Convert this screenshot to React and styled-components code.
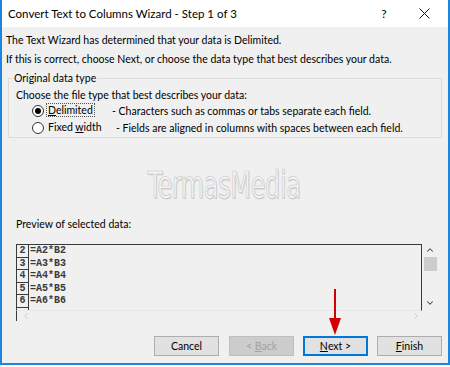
import React from 'react';
import styled, { createGlobalStyle } from 'styled-components';
import { ChevronUp, ChevronDown, ChevronLeft, ChevronRight } from 'lucide-react';

const GlobalStyle = createGlobalStyle`
    html, body {
        margin: 0;
        padding: 0;
        background: #ffffff;
    }
    body {
        font-family: 'Lato', 'Noto Sans', sans-serif;
        font-size: 10.5px;
        color: #000;
    }
`;

const Window = styled.div`
    position: relative;
    width: 450px;
    height: 365px;
    box-sizing: border-box;
    border: solid 2px #1c86dd;
    border-top: none;
    background-color: #f0f0f0;
    display: flex;
    flex-direction: column;
    overflow: hidden;
`;
const TitleBar = styled.div`
    height: 27px;
    background-color: #ffffff;
    display: flex;
    align-items: center;
    padding-left: 6px;
    font-size: 11.5px;
`;
const Title = styled.div`
    flex: 1;
`;
const Help = styled.div`
    width: 20px;
    text-align: center;
    font-size: 12px;
`;
const Close = styled.div`
    width: 40px;
    margin-left: 10px;
    margin-right: 4px;
    display: flex;
    justify-content: center;
    align-items: center;
`;
const Body = styled.div`
    flex: 1;
    display: flex;
    flex-direction: column;
    padding: 6px 6px 0 4px;
`;
const Line = styled.div`
    line-height: 14px;
    margin-bottom: ${props => props.gap || 0}px;
    margin-top: ${props => props.top || 0}px;
`;
const Group = styled.fieldset`
    margin: 5px 0 0 2px;
    padding: 0 0 1px 7px;
    border: solid 1px #dcdcdc;
    min-width: 0;
`;
const Legend = styled.legend`
    padding: 0 2px;
    margin-left: -4px;
    line-height: 14px;
`;
const RadioRow = styled.div`
    display: flex;
    align-items: center;
    height: 17px;
    padding-left: 16px;
`;
const RadioCircle = styled.span`
    width: 12px;
    height: 12px;
    box-sizing: border-box;
    border: solid 1px #333;
    border-radius: 50%;
    background-color: #fff;
    display: flex;
    align-items: center;
    justify-content: center;
    &::after {
        content: '';
        width: 6px;
        height: 6px;
        border-radius: 50%;
        background-color: ${props => (props.checked ? '#000' : 'transparent')};
    }
`;
const RadioLabel = styled.span`
    margin-left: 3px;
    width: ${props => props.width}px;
    line-height: 13px;
    box-sizing: border-box;
    span {
        outline: ${props => (props.focused ? 'dotted 1px #555' : 'none')};
        padding: 0 1px;
    }
`;
const Watermark = styled.div`
    align-self: center;
    margin-top: 28px;
    height: 40px;
    line-height: 40px;
    font-family: 'Liberation Sans Narrow', 'DejaVu Sans Condensed', sans-serif;
    font-size: 37px;
    transform: scaleX(0.72);
    color: #f3f3f3;
    -webkit-text-stroke: 0.7px #c6c6c6;
    text-shadow: 1px 1px 0 #d2d2d2;
    letter-spacing: -0.5px;
    user-select: none;
`;
const PreviewLabel = styled.div`
    margin-top: 11px;
    margin-left: 10px;
    line-height: 14px;
`;
const PreviewFrame = styled.div`
    margin-top: 13px;
    margin-left: 10px;
    width: 422px;
    height: 77px;
    display: grid;
    grid-template-columns: 1fr 16px;
    grid-template-rows: 1fr 10px;
`;
const DataArea = styled.div`
    border: solid 1px #3a3a3a;
    border-bottom: solid 1px #e6e6e6;
    overflow: hidden;
`;
const DataRow = styled.div`
    display: flex;
    height: 12.5px;
    font-family: 'Liberation Mono', monospace;
    font-size: 10px;
    font-weight: bold;
    color: #3a3a3a;
    line-height: 12px;
`;
const RowNum = styled.div`
    width: 12px;
    text-align: center;
    border-right: solid 1px #3a3a3a;
    border-bottom: solid 1px #3a3a3a;
    box-sizing: border-box;
`;
const RowText = styled.div`
    padding-left: 1px;
`;
const VScroll = styled.div`
    display: flex;
    flex-direction: column;
    align-items: center;
    padding: 1px 0 3px;
    color: #444;
`;
const Thumb = styled.div`
    width: 13px;
    height: 14px;
    margin-top: 2px;
    background-color: #cdcdcd;
    flex: none;
`;
const Spacer = styled.div`
    flex: 1;
`;
const HScroll = styled.div`
    display: flex;
    align-items: center;
    justify-content: space-between;
    padding: 0 1px 0 4px;
    color: #c4c4c4;
    border-left: solid 1px #3a3a3a;
`;
const Buttons = styled.div`
    display: flex;
    justify-content: flex-end;
    gap: 9px;
    margin-top: 15px;
`;
const Button = styled.div`
    width: 65px;
    height: 20px;
    box-sizing: border-box;
    display: flex;
    align-items: center;
    justify-content: center;
    white-space: pre;
    border-style: solid;
    border-width: ${props => (props.primary ? '2px' : '1px')};
    background-color: ${props => (props.disabled ? '#cccccc' : '#e1e1e1')};
    color: ${props => (props.disabled ? '#a3a3a3' : '#000')};
    border-color: ${props => (props.disabled ? '#bfbfbf' : props.primary ? '#0078d7' : '#adadad')};
    margin-left: ${props => props.extra || 0}px;
`;
const Arrow = styled.svg`
    position: absolute;
    left: 325px;
    top: 289px;
`;

const rows = [2, 3, 4, 5, 6];

function App() {
    return (
        <>
            <GlobalStyle />
            <Window>
                <TitleBar>
                    <Title>Convert Text to Columns Wizard - Step 1 of 3</Title>
                    <Help>?</Help>
                    <Close>
                        <svg width="11" height="11" viewBox="0 0 11 11">
                            <path d="M0.5 0.5 L10.5 10.5 M10.5 0.5 L0.5 10.5" stroke="#111" strokeWidth="1" />
                        </svg>
                    </Close>
                </TitleBar>
                <Body>
                    <Line gap={5}>The Text Wizard has determined that your data is Delimited.</Line>
                    <Line>If this is correct, choose Next, or choose the data type that best describes your data.</Line>
                    <Group>
                        <Legend>Original data type</Legend>
                        <Line top={3}>Choose the file type that best describes your data:</Line>
                        <RadioRow>
                            <RadioCircle checked />
                            <RadioLabel width={65} focused>
                                <span><u>D</u>elimited</span>
                            </RadioLabel>
                            <span>- Characters such as commas or tabs separate each field.</span>
                        </RadioRow>
                        <RadioRow>
                            <RadioCircle />
                            <RadioLabel width={69}>
                                <span>Fixed <u>w</u>idth</span>
                            </RadioLabel>
                            <span>- Fields are aligned in columns with spaces between each field.</span>
                        </RadioRow>
                    </Group>
                    <Watermark>TermasMedia</Watermark>
                    <PreviewLabel>Preview of selected data:</PreviewLabel>
                    <PreviewFrame>
                        <DataArea>
                            {rows.map(n => (
                                <DataRow key={n}>
                                    <RowNum>{n}</RowNum>
                                    <RowText>=A{n}*B{n}</RowText>
                                </DataRow>
                            ))}
                            <DataRow>
                                <RowNum />
                            </DataRow>
                        </DataArea>
                        <VScroll>
                            <ChevronUp size={10} strokeWidth={2.5} />
                            <Thumb />
                            <Spacer />
                            <ChevronDown size={10} strokeWidth={2.5} />
                        </VScroll>
                        <HScroll>
                            <ChevronLeft size={10} strokeWidth={2} />
                            <ChevronRight size={10} strokeWidth={2} />
                        </HScroll>
                    </PreviewFrame>
                    <Buttons>
                        <Button>Cancel</Button>
                        <Button disabled extra={1}>{'< '}<u>B</u>ack</Button>
                        <Button primary><u>N</u>ext{' >'}</Button>
                        <Button><u>F</u>inish</Button>
                    </Buttons>
                </Body>
                <Arrow width="16" height="48" viewBox="0 0 16 48">
                    <rect x="7" y="0" width="2" height="32" fill="#d40000" />
                    <polygon points="2,29 14,29 8,46" fill="#d40000" />
                </Arrow>
            </Window>
        </>
    );
}

export default App;
